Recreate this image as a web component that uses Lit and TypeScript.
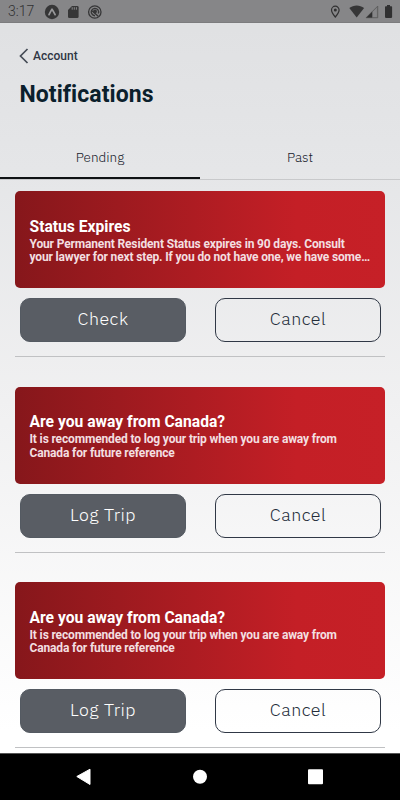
import { LitElement, html, css } from "lit";
import { customElement, property } from "lit/decorators.js";

@customElement("status-bar")
class StatusBar extends LitElement {
  static styles = css`
    :host { display: flex; align-items: center; justify-content: space-between; height: 23px; box-sizing: border-box; padding: 0 7px 0 8px; background: #868688; border-bottom: 1px solid #7c7c7e; color: #303031; font: 300 14px/23px Roboto, sans-serif; }
    .left { display: flex; align-items: center; }
    .time { width: 36px; line-height: 25px; padding-top: 1px; }
    svg { display: block; }
  `;
  render() {
    return html`
      <div class="left">
        <span class="time">3:17</span>
        <svg width="60" height="22" viewBox="44 0 60 22">
          <circle cx="52" cy="12" r="7.2" fill="#363637" />
          <path d="M49 14.7c1-2.1 1.9-3.9 3-5.5 1.1 1.6 2.1 3.4 3.1 5.5" fill="none" stroke="#98989a" stroke-width="1.7" stroke-linejoin="round" stroke-linecap="round" />
          <path d="M72 6h5.3q1.3 0 1.3 1.3v9.4q0 1.3-1.3 1.3h-8q-1.3 0-1.3-1.3V10z" fill="#363637" />
          <path d="M72.2 7.2v2.5M74.3 7.2v2.5M76.4 7.2v2.5" stroke="#909092" stroke-width=".9" />
          <circle cx="94.8" cy="12" r="6.2" fill="none" stroke="#363637" stroke-width="1.3" />
          <path d="M91.7 13.9a3.7 3.7 0 1 1 6.6-.4" fill="none" stroke="#363637" stroke-width="1.3" />
          <path d="M92 10.8l6.2 5.5M91.8 13.6q1 2 3.2 2.2" fill="none" stroke="#363637" stroke-width="1.4" />
          <circle cx="95" cy="11.4" r="1.9" fill="#363637" />
        </svg>
      </div>
      <svg width="64" height="22" viewBox="329 0 64 22">
        <path d="M335.3 17c-2.5-3-3.8-4.9-3.8-7a3.8 3.8 0 0 1 7.6 0c0 2.1-1.3 4-3.8 7z" fill="none" stroke="#303031" stroke-width="1.2" />
        <circle cx="335.3" cy="9.9" r="1.5" fill="#303031" />
        <path d="M349.3 8.1c4.3-3.5 10.5-3.5 14.8 0L356.7 17.4z" fill="#363637" />
        <path d="M366 17.8L377.8 6v11.8z" fill="#6b6b6c" />
        <path d="M366 17.8l6.2-6.2v6.2z" fill="#303031" />
        <path d="M372.7 11.7l4.2-4.2V16.9h-4.2z" fill="#858587" />
        <path d="M366 17.8L377.8 6v11.8z" fill="none" stroke="#4e4e4f" stroke-width=".5" />
        <path d="M387 5h3v1.3h1.3q.8 0 .8.8v10q0 .8-.8.8h-5.5q-.8 0-.8-.8v-10q0-.8.8-.8H387z" fill="#303031" />
      </svg>
    `;
  }
}

@customElement("notice-item")
class NoticeItem extends LitElement {
  @property() heading = "";
  @property({ attribute: false }) lines: string[] = [];
  @property() action = "";
  static styles = css`
    :host { display: block; height: 195.5px; }
    .card { box-sizing: border-box; height: 97px; padding: 25.5px 14.5px 0; border-radius: 5px; color: #fff; background: linear-gradient(90deg, #86171b 0%, #c41f26 76%, #c62027 100%); font-family: Roboto, sans-serif; white-space: nowrap; }
    .title { font-weight: 700; font-size: 15.65px; line-height: 20px; }
    .body { font-weight: 700; font-size: 12px; letter-spacing: -.15px; line-height: 13.6px; color: #f3dfe0; margin-top: 1.2px; }
    .actions { display: flex; justify-content: space-between; padding: 10px 4px 0 5px; }
    .button { box-sizing: border-box; width: 166px; height: 44px; border: 1px solid #545a62; border-radius: 10px; background: #595d64; color: #fff; text-align: center; font: 300 17.8px/39.4px "IBM Plex Sans", "Noto Sans", sans-serif; letter-spacing: .5px; }
    .outline { background: transparent; border-color: #303846; color: #242d3a; }
    .rule { height: 1px; margin-top: 14px; background: #c0c1c3; }
  `;
  render() {
    return html`
      <div class="card">
        <div class="title">${this.heading}</div>
        <div class="body">${this.lines.map((l) => html`<div>${l}</div>`)}</div>
      </div>
      <div class="actions">
        <div class="button">${this.action}</div>
        <div class="button outline">Cancel</div>
      </div>
      <div class="rule"></div>
    `;
  }
}

@customElement("app-root")
class AppRoot extends LitElement {
  static styles = css`
    :host { display: flex; flex-direction: column; width: 400px; height: 800px; overflow: hidden; background: linear-gradient(180deg, #dfe0e2 0, #e5e6e8 170px, #f0f0f1 400px, #fff 730px); }
    status-bar { flex: none; }
    .back { display: flex; align-items: center; height: 20px; margin: 23px 0 0 19px; font: 500 12px/20px Roboto, sans-serif; color: #303643; }
    .back svg { margin-right: 4px; }
    h1 { margin: 12px 0 0 19.5px; padding-top: 1px; font: 700 23px/32px Roboto, sans-serif; color: #0b202c; letter-spacing: .06px; }
    .tabs { display: flex; height: 45px; margin-top: 23px; border-bottom: 1px solid #c8c9cb; flex: none; }
    .tab { flex: 1; height: 45px; box-sizing: border-box; text-align: center; font: 300 13.5px/46px "IBM Plex Sans", "Noto Sans", sans-serif; color: #17212b; }
    .active { border-bottom: 2px solid #0f1214; }
    .list { flex: 1; min-height: 0; overflow: hidden; padding: 11px 15px 0; }
    .nav { flex: none; height: 46px; background: #000; border-top: .5px solid #555; }
    .nav svg { display: block; }
  `;
  render() {
    const away = ["It is recommended to log your trip when you are away from", "Canada for future reference"];
    const status = ["Your Permanent Resident Status expires in 90 days. Consult", "your lawyer for next step. If you do not have one, we have some…"];
    return html`
      <status-bar></status-bar>
      <div class="back">
        <svg width="10" height="16" viewBox="0 0 10 16"><path d="M8.5 1L1.5 8l7 7" fill="none" stroke="#454b55" stroke-width="1.7" /></svg>
        Account
      </div>
      <h1>Notifications</h1>
      <div class="tabs"><div class="tab active">Pending</div><div class="tab">Past</div></div>
      <div class="list">
        <notice-item heading="Status Expires" .lines=${status} action="Check"></notice-item>
        <notice-item heading="Are you away from Canada?" .lines=${away} action="Log Trip"></notice-item>
        <notice-item heading="Are you away from Canada?" .lines=${away} action="Log Trip"></notice-item>
      </div>
      <div class="nav">
        <svg width="400" height="46" viewBox="0 754 400 46" fill="#fff">
          <path d="M76.8 776.5L90 769.2v15.3z" stroke="#fff" stroke-width="1" stroke-linejoin="round" />
          <circle cx="200" cy="776.8" r="7" />
          <rect x="308" y="769.2" width="15" height="15" rx="1" />
        </svg>
      </div>
    `;
  }
}
